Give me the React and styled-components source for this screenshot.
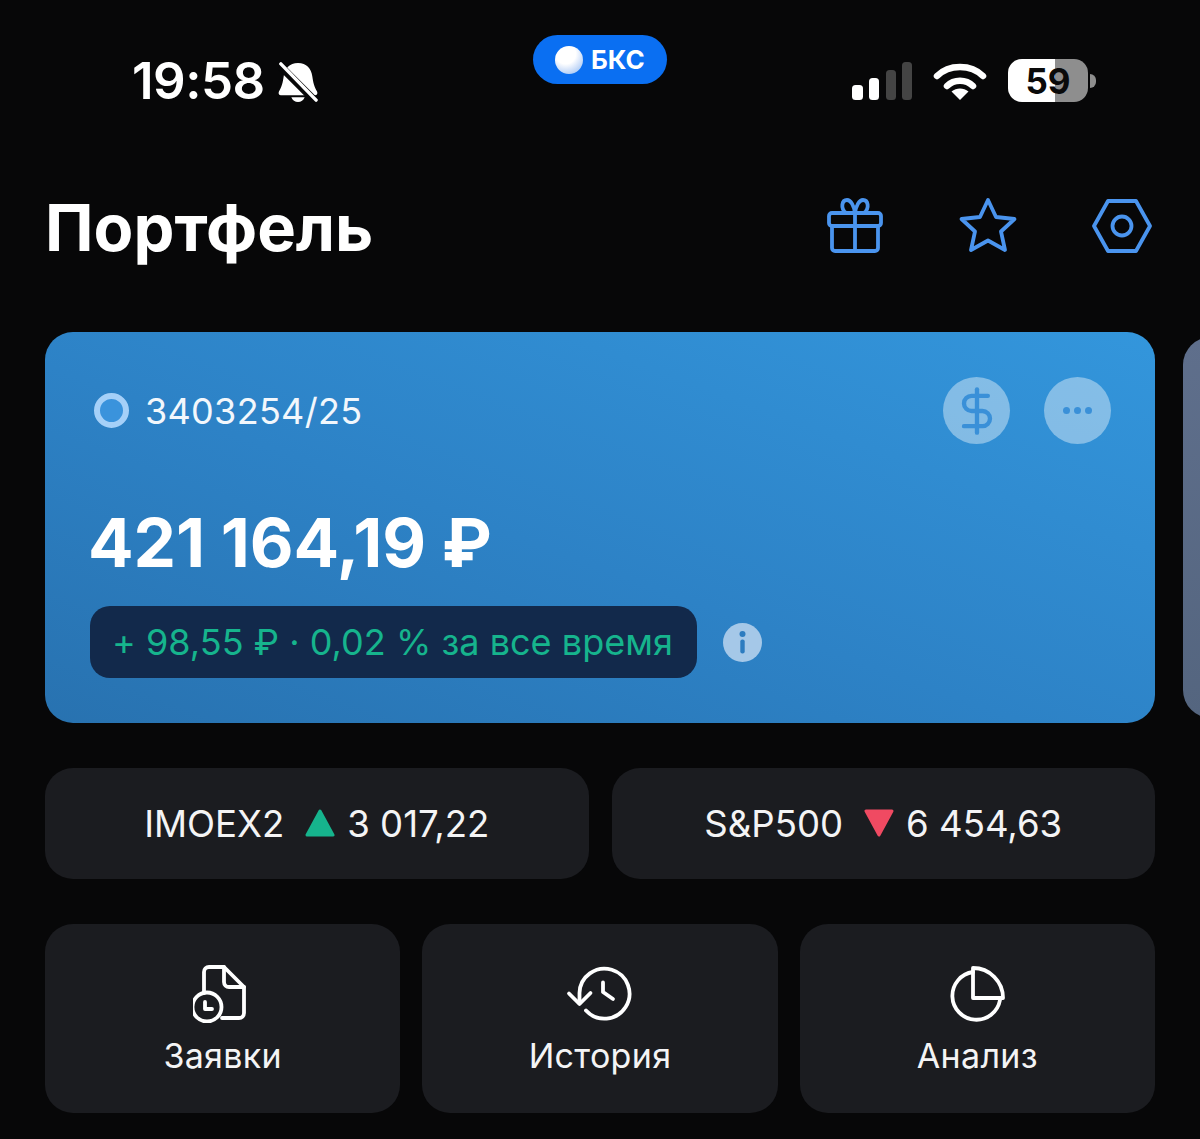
import styled, { createGlobalStyle } from "styled-components";
import { DollarSign } from "lucide-react";

const Global = createGlobalStyle`
  html, body {
    margin: 0;
    padding: 0;
    background: #070708;
  }
  * { box-sizing: border-box; }
`;

const Page = styled.div`
  width: 1200px;
  height: 1139px;
  overflow: hidden;
  background: #070708;
  color: #fff;
  font-family: Inter, "Noto Sans", sans-serif;
`;

const StatusBar = styled.div`
  display: grid;
  grid-template-columns: 1fr auto 1fr;
  align-items: start;
  height: 188px;
  padding-top: 35px;
`;

const StatusLeft = styled.div`
  display: flex;
  align-items: center;
  gap: 13px;
  padding: 21px 0 0 132px;
`;

const Time = styled.span`
  font-size: 51px;
  line-height: 50px;
  font-weight: 600;
  letter-spacing: -0.5px;
`;

const StatusRight = styled.div`
  display: flex;
  justify-content: flex-end;
  align-items: center;
  padding: 24px 104px 0 0;
`;

const BrokerPill = styled.div`
  display: flex;
  align-items: center;
  gap: 8px;
  width: 134px;
  height: 49px;
  padding-left: 22px;
  border-radius: 25px;
  background: #0a6ff2;
  font-size: 26px;
  font-weight: 700;
`;

const Ball = styled.span`
  width: 28px;
  height: 28px;
  border-radius: 50%;
  background: radial-gradient(circle at 38% 28%, #fff 38%, #d6e4fa 60%, #8ab6f0 100%);
`;

const Battery = styled.div`
  display: flex;
  align-items: center;
  justify-content: center;
  width: 80px;
  height: 43px;
  margin-left: 21px;
  border-radius: 14px;
  background: linear-gradient(90deg, #fff 59%, #8e8e8e 59%);
  color: #0a0a0a;
  font-size: 35px;
  font-weight: 700;
`;

const BatteryNub = styled.span`
  width: 6px;
  height: 14px;
  margin-left: 2px;
  border-radius: 0 6px 6px 0;
  background: #8e8e8e;
`;

const Header = styled.div`
  display: flex;
  align-items: center;
  justify-content: space-between;
  height: 80px;
  padding: 0 48px 0 45px;
`;

const Title = styled.h1`
  margin: 0;
  font-size: 65px;
  line-height: 78px;
  font-weight: 700;
`;

const HeaderIcons = styled.div`
  display: flex;
  align-items: center;
  gap: 74px;
  margin-top: -4px;
`;

const Carousel = styled.div`
  display: flex;
  align-items: center;
  gap: 28px;
  margin-top: 64px;
  padding-left: 45px;
`;

const AccountCard = styled.div`
  flex: none;
  width: 1110px;
  height: 391px;
  padding: 45px 44px 0 45px;
  border-radius: 28px;
  background: linear-gradient(200deg, #3396dc 0%, #2d82c6 55%, #2872b0 100%);
`;

const NextCard = styled.div`
  flex: none;
  width: 100px;
  height: 381px;
  border-radius: 28px;
  background: linear-gradient(180deg, #5f6f8c 0%, #54657f 100%);
`;

const CardTop = styled.div`
  display: flex;
  align-items: center;
  justify-content: space-between;
`;

const AccountName = styled.div`
  display: flex;
  align-items: center;
  gap: 16px;
  padding-left: 4px;
  font-size: 36px;
  letter-spacing: 0.3px;
  color: #f2f7fc;
`;

const Ring = styled.span`
  width: 35px;
  height: 35px;
  border-radius: 50%;
  border: 6px solid #a5d0f8;
  background: #3a93dc;
`;

const CardActions = styled.div`
  display: flex;
  gap: 34px;
`;

const RoundButton = styled.div`
  display: flex;
  align-items: center;
  justify-content: center;
  gap: 4px;
  width: 67px;
  height: 67px;
  border-radius: 50%;
  background: rgba(255, 255, 255, 0.4);
  color: #3a90d8;
`;

const Dot = styled.span`
  width: 7px;
  height: 7px;
  border-radius: 50%;
  background: #3a90d8;
`;

const Amount = styled.div`
  margin: 61px 0 0 -2px;
  font-size: 67.5px;
  line-height: 76px;
  font-weight: 700;
  letter-spacing: -0.1px;
`;

const ProfitRow = styled.div`
  display: flex;
  align-items: center;
  gap: 26px;
  margin-top: 25px;
`;

const ProfitChip = styled.div`
  display: flex;
  align-items: center;
  height: 72px;
  padding: 0 24px 0 22px;
  border-radius: 20px;
  background: #12294b;
  color: #16b48d;
  font-size: 36px;
  letter-spacing: 0.03px;
  white-space: nowrap;
`;

const IndexRow = styled.div`
  display: grid;
  grid-template-columns: 1fr 1fr;
  gap: 23px;
  margin: 45px 45px 0;
`;

const IndexCard = styled.div`
  display: flex;
  align-items: center;
  justify-content: center;
  height: 111px;
  padding-top: 1px;
  border-radius: 28px;
  background: #1b1c20;
  font-size: 36.6px;
  color: #f4f4f5;
`;

const Triangle = styled.svg`
  margin: -2px 12px 0 21px;
`;

const ActionRow = styled.div`
  display: grid;
  grid-template-columns: repeat(3, 1fr);
  gap: 22px;
  margin: 45px 45px 0;
`;

const ActionCard = styled.div`
  display: flex;
  flex-direction: column;
  align-items: center;
  height: 189px;
  padding-top: 39px;
  border-radius: 28px;
  background: #1b1c20;
`;

const ActionIcon = styled.svg`
  display: block;
  height: 60px;
  fill: none;
  stroke: #fff;
  stroke-width: 3.8;
  stroke-linecap: round;
  stroke-linejoin: round;
`;

const ActionLabel = styled.span`
  margin-top: 13px;
  font-size: 34px;
  line-height: 40px;
  letter-spacing: 0.3px;
  color: #f4f4f5;
`;

const HeaderIcon = styled.svg`
  display: block;
  fill: none;
  stroke: #4a94ee;
  stroke-width: 3.8;
  stroke-linecap: round;
  stroke-linejoin: round;
`;

const BellIcon = styled.svg`
  margin-top: 2px;
`;

const BellOff = () => (
  <BellIcon width="40" height="42" viewBox="0 0 42 44">
    <path d="M21 2c9 0 14 6 15 14 1 7 2 11 5 16 1 2 0 4-2 4H3c-2 0-3-2-2-4 3-5 4-9 5-16C7 8 12 2 21 2z" fill="#fff" />
    <path d="M14 38h14c-1 3-4 5-7 5s-6-2-7-5z" fill="#fff" />
    <path d="M2 5l37 37" stroke="#070708" strokeWidth="8" />
    <path d="M3 3l37 38" stroke="#fff" strokeWidth="3.6" strokeLinecap="round" />
  </BellIcon>
);

const Signal = () => (
  <svg width="62" height="38" viewBox="0 0 62 38">
    <rect x="0" y="23" width="11" height="15" rx="3.5" fill="#fff" />
    <rect x="17" y="16" width="10" height="22" rx="3.5" fill="#fff" />
    <rect x="34" y="8" width="10" height="30" rx="3.5" fill="#444" />
    <rect x="50" y="0" width="10" height="38" rx="3.5" fill="#444" />
  </svg>
);

const WifiIcon = styled.svg`
  margin-left: 19px;
`;

const Wifi = () => (
  <WifiIcon width="54" height="40" viewBox="0 0 54 40">
    <path d="M4 15C16 3 38 3 50 15" fill="none" stroke="#fff" strokeWidth="6.5" strokeLinecap="round" />
    <path d="M14 25c7-7 19-7 26 0" fill="none" stroke="#fff" strokeWidth="6.5" strokeLinecap="round" />
    <path d="M27 39L18.5 30.5c5-4 12-4 17 0z" fill="#fff" />
  </WifiIcon>
);

const Gift = () => (
  <HeaderIcon width="58" height="56" viewBox="0 0 58 56">
    <rect x="3" y="15" width="52" height="13" rx="3" />
    <path d="M6 28v22a3 3 0 0 0 3 3h40a3 3 0 0 0 3-3V28M29 15v38" />
    <path d="M29 15h-9c-6-5-4-13 1-13 4 0 7 6 8 13 1-7 4-13 8-13 5 0 7 8 1 13h-9" />
  </HeaderIcon>
);

const Star = () => (
  <HeaderIcon width="60" height="58" viewBox="0 0 60 58">
    <path d="M30 3l8 17 18.500 2-13.500 12.500 4 18.500-17-9.500-17 9.500 4-18.500L3.500 22l18.500-2z" />
  </HeaderIcon>
);

const Hex = () => (
  <HeaderIcon width="60" height="56" viewBox="0 0 60 56">
    <path d="M16 3h28l14 25-14 25H16L2 28z" />
    <circle cx="30" cy="28" r="9.500" />
  </HeaderIcon>
);

const Info = () => (
  <svg width="39" height="39" viewBox="0 0 39 39">
    <circle cx="19.500" cy="19.500" r="19.500" fill="#a5c8e8" />
    <circle cx="19.500" cy="11" r="3" fill="#2c7cc0" />
    <rect x="17.300" y="16.500" width="4.400" height="14" rx="2" fill="#2c7cc0" />
  </svg>
);

const Orders = () => (
  <ActionIcon width="60" viewBox="3 0 60 60">
    <path d="M14 30V9a5 5 0 0 1 5-5h15l20 20v26a5 5 0 0 1-5 5H32" />
    <path d="M34 4v15a5 5 0 0 0 5 5h15" />
    <circle cx="17" cy="44" r="14.500" />
    <path d="M15 39v7h7" />
  </ActionIcon>
);

const History = () => (
  <ActionIcon width="68" viewBox="1 0 68 60">
    <path d="M14.500 40V30A25 25 0 1 1 21 47.500" />
    <path d="M4 30.500L14.500 41 25.500 30" />
    <path d="M38 19.500V29l10 7" />
  </ActionIcon>
);

const Pie = () => (
  <ActionIcon width="66" viewBox="0 0 66 60">
    <path d="M29 9A24 24 0 1 0 56 37" />
    <path d="M29 5a30 30 0 0 1 30 30H29z" />
  </ActionIcon>
);

const App = () => {
  return (
    <Page>
      <Global />
      <StatusBar>
        <StatusLeft>
          <Time>19:58</Time>
          <BellOff />
        </StatusLeft>
        <BrokerPill>
          <Ball />
          БКС
        </BrokerPill>
        <StatusRight>
          <Signal />
          <Wifi />
          <Battery>59</Battery>
          <BatteryNub />
        </StatusRight>
      </StatusBar>

      <Header>
        <Title>Портфель</Title>
        <HeaderIcons>
          <Gift />
          <Star />
          <Hex />
        </HeaderIcons>
      </Header>

      <Carousel>
        <AccountCard>
          <CardTop>
            <AccountName>
              <Ring />
              3403254/25
            </AccountName>
            <CardActions>
              <RoundButton>
                <DollarSign size={52} strokeWidth={2} />
              </RoundButton>
              <RoundButton>
                <Dot />
                <Dot />
                <Dot />
              </RoundButton>
            </CardActions>
          </CardTop>
          <Amount>421 164,19 ₽</Amount>
          <ProfitRow>
            <ProfitChip>+ 98,55 ₽ · 0,02 % за все время</ProfitChip>
            <Info />
          </ProfitRow>
        </AccountCard>
        <NextCard />
      </Carousel>

      <IndexRow>
        <IndexCard>
          IMOEX2
          <Triangle width="30" height="30" viewBox="0 0 30 30">
            <path d="M15 3L28 27H2z" fill="#16b48d" stroke="#16b48d" strokeWidth="3" strokeLinejoin="round" />
          </Triangle>
          3 017,22
        </IndexCard>
        <IndexCard>
          S&amp;P500
          <Triangle width="30" height="30" viewBox="0 0 30 30">
            <path d="M2 3h26L15 27z" fill="#f04a62" stroke="#f04a62" strokeWidth="3" strokeLinejoin="round" />
          </Triangle>
          6 454,63
        </IndexCard>
      </IndexRow>

      <ActionRow>
        <ActionCard>
          <Orders />
          <ActionLabel>Заявки</ActionLabel>
        </ActionCard>
        <ActionCard>
          <History />
          <ActionLabel>История</ActionLabel>
        </ActionCard>
        <ActionCard>
          <Pie />
          <ActionLabel>Анализ</ActionLabel>
        </ActionCard>
      </ActionRow>
    </Page>
  );
};

export default App;
